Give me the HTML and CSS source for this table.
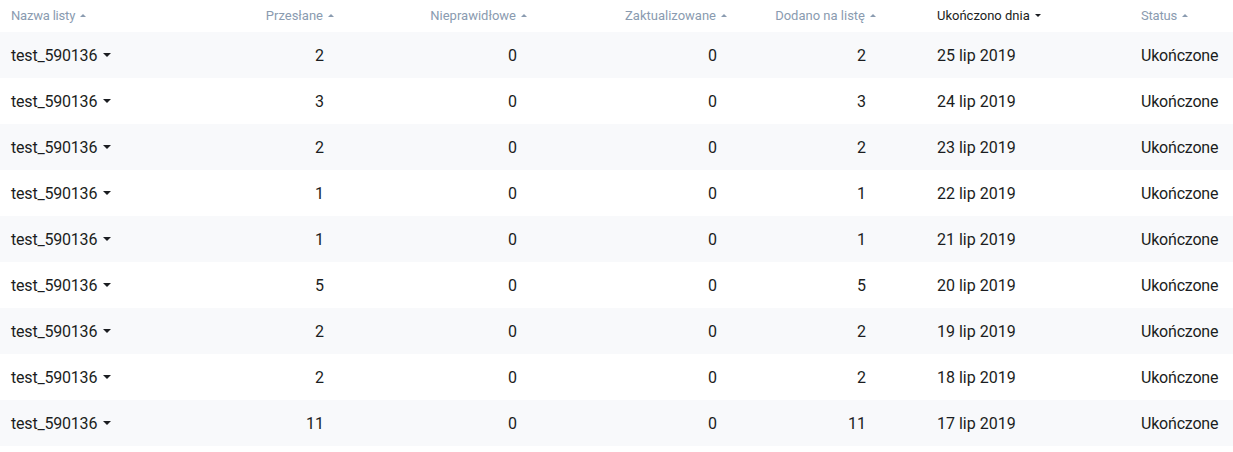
FILE: index.html
```html
<!DOCTYPE html>
<html lang="pl">
<head>
<meta charset="utf-8">
<title>Listy</title>
<link rel="stylesheet" href="styles.css">
</head>
<body>
<div class="table">
  <div class="row head">
    <div class="cell c-name"><span class="th">Nazwa listy<i class="tri up"></i></span></div>
    <div class="cell c-num c2"><span class="th">Przesłane<i class="tri up"></i></span></div>
    <div class="cell c-num c3"><span class="th">Nieprawidłowe<i class="tri up"></i></span></div>
    <div class="cell c-num c4"><span class="th">Zaktualizowane<i class="tri up"></i></span></div>
    <div class="cell c-num c5"><span class="th">Dodano na listę<i class="tri up"></i></span></div>
    <div class="cell c-date"><span class="th active">Ukończono dnia<i class="tri down"></i></span></div>
    <div class="cell c-status"><span class="th">Status<i class="tri up"></i></span></div>
  </div>
  <div class="row body"><div class="cell c-name">test_590136<i class="caret"></i></div><div class="cell c-num c2 n">2</div><div class="cell c-num c3 n">0</div><div class="cell c-num c4 n">0</div><div class="cell c-num c5 n">2</div><div class="cell c-date">25 lip 2019</div><div class="cell c-status">Ukończone</div></div>
  <div class="row body"><div class="cell c-name">test_590136<i class="caret"></i></div><div class="cell c-num c2 n">3</div><div class="cell c-num c3 n">0</div><div class="cell c-num c4 n">0</div><div class="cell c-num c5 n">3</div><div class="cell c-date">24 lip 2019</div><div class="cell c-status">Ukończone</div></div>
  <div class="row body"><div class="cell c-name">test_590136<i class="caret"></i></div><div class="cell c-num c2 n">2</div><div class="cell c-num c3 n">0</div><div class="cell c-num c4 n">0</div><div class="cell c-num c5 n">2</div><div class="cell c-date">23 lip 2019</div><div class="cell c-status">Ukończone</div></div>
  <div class="row body"><div class="cell c-name">test_590136<i class="caret"></i></div><div class="cell c-num c2 n">1</div><div class="cell c-num c3 n">0</div><div class="cell c-num c4 n">0</div><div class="cell c-num c5 n">1</div><div class="cell c-date">22 lip 2019</div><div class="cell c-status">Ukończone</div></div>
  <div class="row body"><div class="cell c-name">test_590136<i class="caret"></i></div><div class="cell c-num c2 n">1</div><div class="cell c-num c3 n">0</div><div class="cell c-num c4 n">0</div><div class="cell c-num c5 n">1</div><div class="cell c-date">21 lip 2019</div><div class="cell c-status">Ukończone</div></div>
  <div class="row body"><div class="cell c-name">test_590136<i class="caret"></i></div><div class="cell c-num c2 n">5</div><div class="cell c-num c3 n">0</div><div class="cell c-num c4 n">0</div><div class="cell c-num c5 n">5</div><div class="cell c-date">20 lip 2019</div><div class="cell c-status">Ukończone</div></div>
  <div class="row body"><div class="cell c-name">test_590136<i class="caret"></i></div><div class="cell c-num c2 n">2</div><div class="cell c-num c3 n">0</div><div class="cell c-num c4 n">0</div><div class="cell c-num c5 n">2</div><div class="cell c-date">19 lip 2019</div><div class="cell c-status">Ukończone</div></div>
  <div class="row body"><div class="cell c-name">test_590136<i class="caret"></i></div><div class="cell c-num c2 n">2</div><div class="cell c-num c3 n">0</div><div class="cell c-num c4 n">0</div><div class="cell c-num c5 n">2</div><div class="cell c-date">18 lip 2019</div><div class="cell c-status">Ukończone</div></div>
  <div class="row body"><div class="cell c-name">test_590136<i class="caret"></i></div><div class="cell c-num c2 n">11</div><div class="cell c-num c3 n">0</div><div class="cell c-num c4 n">0</div><div class="cell c-num c5 n">11</div><div class="cell c-date">17 lip 2019</div><div class="cell c-status">Ukończone</div></div>
</div>
</body>
</html>
```
FILE: styles.css
```css
* { box-sizing: border-box; }
html, body { margin: 0; padding: 0; background: #fff; }
body {
  font-family: Roboto, "Liberation Sans", Arial, sans-serif;
  color: #1b1d21;
  width: 1233px;
  overflow: hidden;
}
.table {
  display: flex;
  flex-direction: column;
  box-shadow: 0 3px 6px rgba(30, 40, 60, 0.09);
}
.row {
  display: grid;
  grid-template-columns: 200px 145px 193px 200px 188px 204px 103px;
  align-items: center;
}
.row.head { height: 32px; font-size: 13px; }
.row.body { height: 46px; font-size: 16px; }
.row.body:nth-child(even) { background: #f8f9fb; }
.cell { padding: 0 11px; white-space: nowrap; }
.c-num { text-align: right; }
.c-num.n { padding-right: 21px; }
.c5 { padding-right: 50px; }
.c-num.c5.n { padding-right: 60px; }
.th { color: #8a9bb0; display: inline-flex; align-items: center; padding-bottom: 2px; }
.th.active { color: #1b1d21; }
.tri {
  display: inline-block;
  width: 0; height: 0;
  margin-left: 5px;
  border-left: 3px solid transparent;
  border-right: 3px solid transparent;
}
.tri.up { border-bottom: 3px solid currentColor; }
.tri.down { border-top: 3px solid currentColor; }
.c-name { display: flex; align-items: center; letter-spacing: -0.2px; }
.c-status { letter-spacing: -0.2px; }
.caret {
  display: inline-block;
  width: 0; height: 0;
  margin-left: 6px;
  border-left: 4px solid transparent;
  border-right: 4px solid transparent;
  border-top: 4px solid #1b1d21;
}
```
